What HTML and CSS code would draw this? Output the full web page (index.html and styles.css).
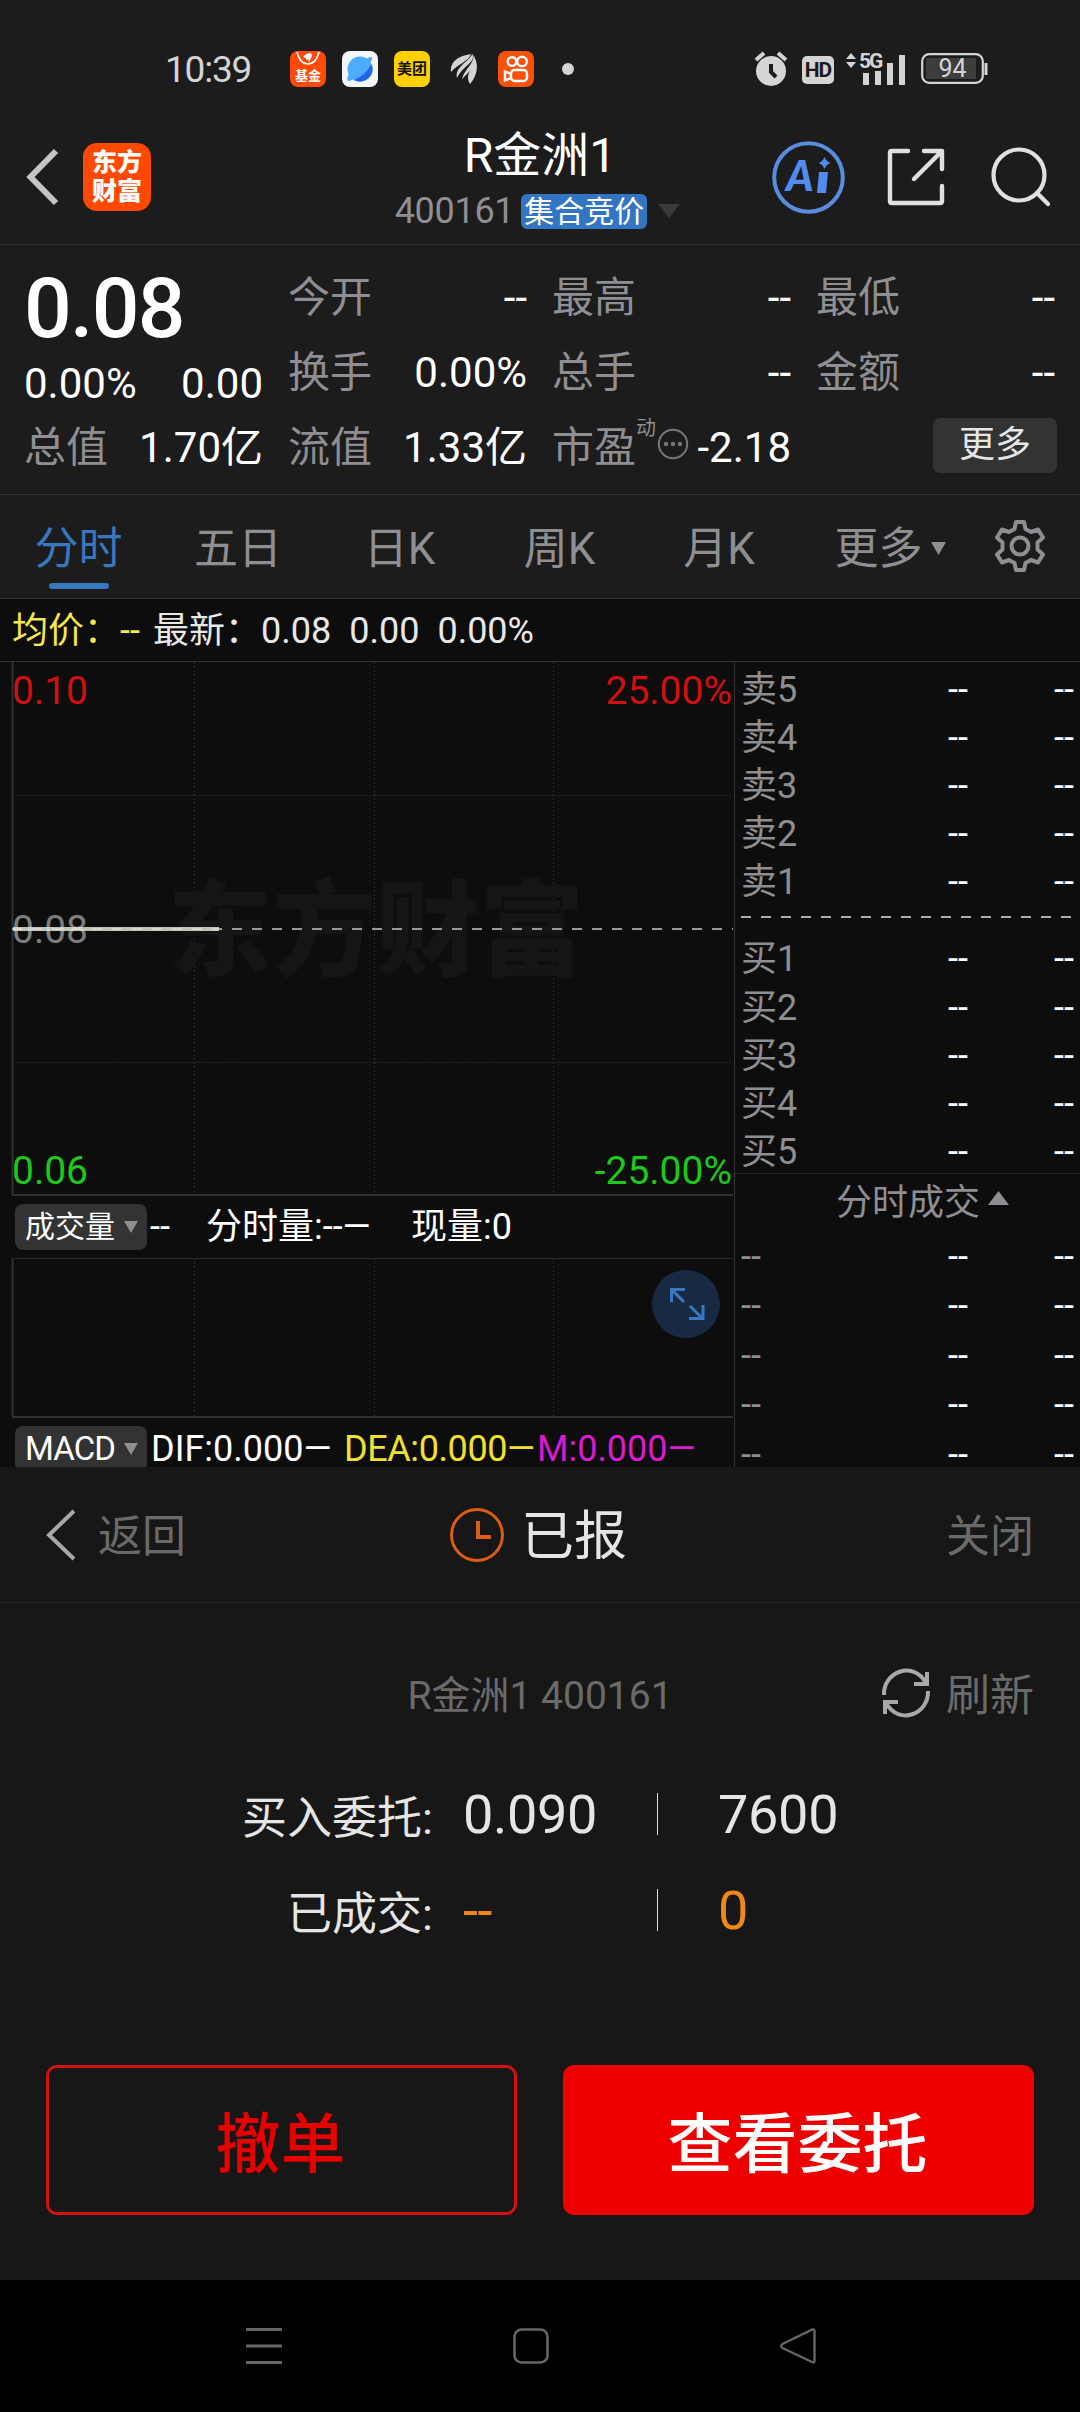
FILE: index.html
```html
<!DOCTYPE html>
<html lang="zh-CN">
<head>
<meta charset="utf-8">
<title>R金洲1 400161</title>
<link rel="stylesheet" href="styles.css">
</head>
<body>
<div class="screen">
  <div class="status">
    <span class="clock">10:39</span>
    <div class="apps">
      <div class="app app-fund"><svg width="36" height="17" viewBox="0 0 36 17"><path d="M7 1c2 8 6 12 11 12s9-4 11-12" fill="none" stroke="#fff" stroke-width="1.6"/><path d="M13 6q3-4 8-4l1 3-3 6-1-3-2 1v-2z" fill="#fff"/></svg><b>基金</b></div>
      <svg class="app" viewBox="0 0 36 36"><rect width="36" height="36" rx="8" fill="#f2f5f9"/><circle cx="18" cy="18" r="12.5" fill="#4badfc"/><path d="M29.5 13A12.5 12.5 0 0 1 12 29Q24 24 29.500 13z" fill="#1f63e8"/><path d="M24 8q7-4 6 0-3 8-12 16-8 6-12 6-2-2 1-7" fill="#4badfc"/></svg>
      <div class="app app-meituan"><b>美团</b></div>
      <svg class="app" viewBox="0 0 36 36" fill="#d4d4d4"><path d="M5 21C4 10 13 5 25 3 22 11 13 12 5 21z"/><path d="M11 27C9 16 20 13 26.500 3c3 9-9 11-15.500 24z"/><path d="M16 28C18 19 28 13 27.500 4c5 8-4 17-11.500 24z"/><path d="M24 33c-6-11 4-14 4.500-27 4.500 9 2.500 19-4.500 27z"/></svg>
      <svg class="app" viewBox="0 0 36 36"><rect width="36" height="36" rx="8" fill="#f8510b"/><g fill="none" stroke="#fff" stroke-width="2.400"><circle cx="14" cy="10.500" r="4.300"/><circle cx="24" cy="10.500" r="4.800"/><rect x="13" y="19" width="16" height="11" rx="3.500"/><path d="M13 23l-6-2.500v9l6-2.500"/></g></svg>
      <i class="dot"></i>
    </div>
    <div class="sys">
      <svg width="34" height="36" viewBox="0 0 34 36"><circle cx="17" cy="20" r="15" fill="#d4d4d4"/><path d="M2 9l8-7M32 9l-8-7" stroke="#d4d4d4" stroke-width="4"/><path d="M17 13v8l5 5" stroke="#1c1c1c" stroke-width="4" fill="none"/></svg>
      <span class="hd">HD</span>
      <svg class="signal" width="62" height="36" viewBox="0 0 62 36" fill="#d4d4d4"><path d="M1 8l5-6 5 6zM1 11h10l-5 6z"/><text x="14" y="17" class="g5">5G</text><path d="M18 22h6v12h-6zM30 20h6v14h-6zM42 12h6v22h-6zM54 4h6v30h-6z"/></svg>
      <svg width="68" height="34" viewBox="0 0 68 34"><rect x="1.200" y="2.200" width="60.600" height="28.600" rx="7" fill="none" stroke="#d4d4d4" stroke-width="2.200"/><rect x="5" y="6" width="50" height="21" fill="#3d3d3d"/><path d="M65 11v12" stroke="#d4d4d4" stroke-width="3"/><text x="31.500" y="25" text-anchor="middle" class="bat">94</text></svg>
    </div>
  </div>

  <header class="top">
    <svg class="back" width="34" height="56" viewBox="0 0 34 56"><path d="M31 2L5.500 28l25.500 26" fill="none" stroke="#c4c4c4" stroke-width="6"/></svg>
    <div class="brand">东方<br>财富</div>
    <div class="title">
      <h1>R金洲1</h1>
      <div class="sub"><span>400161</span><span class="tag">集合竞价</span><svg width="22" height="14"><path d="M0 0h22L11 14z" fill="#3a3a3a"/></svg></div>
    </div>
    <div class="tools">
      <svg width="73" height="73" viewBox="0 0 73 73"><circle cx="36.500" cy="36.500" r="34.300" fill="none" stroke="#5a8cdd" stroke-width="4"/><text x="14" y="50" class="ai">A</text><path d="M47 31h9l-2 21h-9z" fill="#528cf0"/><path d="M52.500 16q1.500 4.500 6 6-4.500 1.500-6 6-1.500-4.500-6-6 4.500-1.500 6-6z" fill="#528cf0"/></svg>
      <svg class="share" width="58" height="58" viewBox="0 0 58 58" fill="none" stroke="#e0e0e0" stroke-width="4.400" stroke-linecap="round" stroke-linejoin="round"><path d="M21 3H5Q3 3 3 5v48q0 2 2 2h48q2 0 2-2V38M37 3h18v18M54 4L27 31"/></svg>
      <svg width="60" height="60" viewBox="0 0 60 60" fill="none" stroke="#e0e0e0" stroke-width="4.200" stroke-linecap="round"><circle cx="28" cy="28" r="25.500"/><path d="M46 46l11 11"/></svg>
    </div>
  </header>

  <section class="quote">
    <div class="col first">
      <div class="price">0.08</div>
      <div class="row chg"><span>0.00%</span><span>0.00</span></div>
      <div class="row"><label>总值</label><span>1.70亿</span></div>
    </div>
    <div class="col">
      <div class="row"><label>今开</label><span>--</span></div>
      <div class="row"><label>换手</label><span>0.00%</span></div>
      <div class="row"><label>流值</label><span>1.33亿</span></div>
    </div>
    <div class="col">
      <div class="row"><label>最高</label><span>--</span></div>
      <div class="row"><label>总手</label><span>--</span></div>
      <div class="row pe"><label>市盈</label><sup>动</sup><svg width="32" height="32" viewBox="0 0 32 32"><circle cx="16" cy="16" r="14.200" fill="none" stroke="#77777a" stroke-width="2"/><g fill="#77777a"><circle cx="9" cy="16" r="2.200"/><circle cx="16" cy="16" r="2.200"/><circle cx="23" cy="16" r="2.200"/></g></svg><span>-2.18</span></div>
    </div>
    <div class="col">
      <div class="row"><label>最低</label><span>--</span></div>
      <div class="row"><label>金额</label><span>--</span></div>
      <div class="row end"><button class="more">更多</button></div>
    </div>
  </section>

  <nav class="tabs">
    <a class="on">分时</a><a>五日</a><a>日K</a><a>周K</a><a>月K</a>
    <a>更多<svg width="15" height="13"><path d="M0 0h15L7.500 13z" fill="#8e8e93"/></svg></a>
    <a><svg class="gear" width="54" height="54" viewBox="0 0 54 54" fill="none" stroke="#8e8e93" stroke-width="4" stroke-linejoin="round"><path d="M23 3h8l1.500 7 5.500 3 7-2.500 5 8-5.500 5v7l5.500 5-5 8-7-2.500-5.500 3L31 51h-8l-1.500-7-5.500-3-7 2.500-5-8 5.500-5v-7L4 18.500l5-8 7 2.500 5.500-3z"/><circle cx="27" cy="27" r="8.500"/></svg></a>
  </nav>

  <div class="info"><span class="avg">均价：--</span><span>最新：0.08</span><span>0.00</span><span>0.00%</span></div>

  <main class="market">
    <div class="charts">
      <div class="plot">
        <svg class="grid" width="734" height="535" viewBox="0 0 734 535">
          <path d="M12.500 0V534" stroke="#303030" stroke-width="2"/>
          <path d="M194.500 0V533M374.500 0V533M553.500 0V533" stroke="#2b2b2b" stroke-dasharray="2 2"/>
          <path d="M12 133.500H733M12 400.500H733" stroke="#232323" stroke-dasharray="2 1"/>
          <path d="M12 533H733" stroke="#303030" stroke-width="2"/>
        </svg>
        <div class="watermark">东方财富</div>
        <div class="lab up"><span>0.10</span><span>25.00%</span></div>
        <div class="lab"><span>0.08</span></div>
        <div class="lab down"><span>0.06</span><span>-25.00%</span></div>
        <svg class="grid" width="734" height="535" viewBox="0 0 734 535"><path d="M12 267H733" stroke="#9a9a9a" stroke-width="2" stroke-dasharray="10 10"/><path d="M13 267H219" stroke="#e2e2d6" stroke-width="4" opacity=".85"/></svg>
      </div>
      <div class="bar vol"><button class="pick">成交量<i></i></button><span>--</span><span class="v1">分时量:--—</span><span class="v2">现量:0</span></div>
      <div class="volume">
        <svg class="grid" width="734" height="160" viewBox="0 0 734 160">
          <path d="M12 .5H733" stroke="#2a2a2a"/>
          <path d="M12.500 0V159" stroke="#303030" stroke-width="2"/>
          <path d="M194.500 0V158M374.500 0V158M553.500 0V158" stroke="#2b2b2b" stroke-dasharray="2 2"/>
          <path d="M12 159H733" stroke="#303030" stroke-width="2"/>
        </svg>
        <svg class="expand" width="68" height="68" viewBox="0 0 68 68"><circle cx="34" cy="34" r="34" fill="#172a42"/><path d="M19.500 32V19.500H33M20 20l12 12M51 35v13.500H37M50 48L38 36" fill="none" stroke="#3878c0" stroke-width="3"/></svg>
      </div>
      <div class="bar macd"><button class="pick">MACD<i></i></button><span class="dif">DIF:0.000—</span><span class="dea">DEA:0.000—</span><span class="m">M:0.000—</span></div>
    </div>

    <aside class="book">
      <div class="level"><label>卖5</label><span>--</span><span>--</span></div>
      <div class="level"><label>卖4</label><span>--</span><span>--</span></div>
      <div class="level"><label>卖3</label><span>--</span><span>--</span></div>
      <div class="level"><label>卖2</label><span>--</span><span>--</span></div>
      <div class="level"><label>卖1</label><span>--</span><span>--</span></div>
      <svg class="split" width="334" height="29"><path d="M0 12H334" stroke="#aaa" stroke-width="2" stroke-dasharray="10 10"/></svg>
      <div class="level"><label>买1</label><span>--</span><span>--</span></div>
      <div class="level"><label>买2</label><span>--</span><span>--</span></div>
      <div class="level"><label>买3</label><span>--</span><span>--</span></div>
      <div class="level"><label>买4</label><span>--</span><span>--</span></div>
      <div class="level"><label>买5</label><span>--</span><span>--</span></div>
      <div class="deals-title">分时成交<svg width="21" height="14"><path d="M0 14h21L10.500 0z" fill="#8e8e93"/></svg></div>
      <div class="level deal"><label>--</label><span>--</span><span>--</span></div>
      <div class="level deal"><label>--</label><span>--</span><span>--</span></div>
      <div class="level deal"><label>--</label><span>--</span><span>--</span></div>
      <div class="level deal"><label>--</label><span>--</span><span>--</span></div>
      <div class="level deal last"><label>--</label><span>--</span><span>--</span></div>
    </aside>
  </main>

  <section class="sheet">
    <div class="sheet-head">
      <a class="ret"><svg width="30" height="52" viewBox="0 0 30 52"><path d="M28 2L3 26l25 24" fill="none" stroke="#a8a8a8" stroke-width="4"/></svg><span>返回</span></a>
      <div class="state"><svg width="54" height="56" viewBox="0 0 54 56" fill="none" stroke="#dd5d14"><circle cx="27" cy="28" r="25.500" stroke-width="3"/><path d="M28 14v16h13" stroke-width="4"/></svg><span>已报</span></div>
      <a class="close"><span>关闭</span></a>
    </div>
    <div class="stock">
      <span>R金洲1 400161</span>
      <a class="refresh"><svg width="48" height="50" viewBox="0 0 48 50" fill="none" stroke="#a8a8a8" stroke-width="4"><path d="M2 27C1 4 31-8 44 15M46 23C47 46 17 58 4 35"/><path d="M45 4v12H32M3 46V34H16"/></svg>刷新</a>
    </div>
    <div class="order">
      <label>买入委托:</label><b>0.090</b><i></i><b>7600</b>
      <label>已成交:</label><b class="o">--</b><i></i><b class="o">0</b>
    </div>
    <div class="actions"><button class="cancel">撤单</button><button class="view">查看委托</button></div>
  </section>

  <div class="sysnav">
    <svg width="36" height="38" viewBox="0 0 36 38"><path d="M0 2.500h36M0 19h36M0 35.500h36" stroke="#666" stroke-width="3"/></svg>
    <svg width="36" height="36" viewBox="0 0 36 36"><rect x="1.500" y="1.500" width="33" height="33" rx="7" fill="none" stroke="#666" stroke-width="2.600"/></svg>
    <svg width="36" height="36" viewBox="0 0 36 36"><path d="M32.500 1.500Q34.500 1 34.500 3.500v29q0 2.500-2.500 1.500L2.500 20q-2.500-2 0-4z" fill="none" stroke="#666" stroke-width="2.400"/></svg>
  </div>
</div>
</body>
</html>
```
FILE: styles.css
```css
* { box-sizing: border-box; }
body { margin: 0; background: #000; }
svg { display: block; flex: none; overflow: visible; }
h1, i, b { font-weight: 400; font-style: normal; margin: 0; }
button { font: inherit; border: 0; padding: 0; margin: 0; color: inherit; }

.screen {
  width: 1080px; height: 2412px; overflow: hidden;
  display: flex; flex-direction: column;
  background: #1c1c1c; color: #fff;
  font-family: Roboto, "Noto Sans CJK SC", sans-serif;
  white-space: nowrap;
}

/* status bar */
.status { height: 110px; padding: 28px 91px 0 165px; display: flex; align-items: center; color: #d4d4d4; }
.clock { font-size: 37px; line-height: 46px; letter-spacing: -1.2px; width: 125px; padding-top: 2px; }
.apps { display: flex; gap: 16px; align-items: center; }
.app { width: 36px; height: 36px; border-radius: 8px; color: #fff; text-align: center; }
.app b { display: block; font-weight: 700; }
.app-fund { background: #ff4a0a; }
.app-fund b { font-size: 13px; line-height: 19px; margin-top: -2px; }
.app-meituan { background: #ffd000; color: #111; }
.app-meituan b { font-size: 15px; line-height: 36px; }
.dot { width: 12px; height: 12px; border-radius: 50%; background: #d4d4d4; margin-left: 12px; }
.sys { display: flex; align-items: center; margin-left: auto; }
.hd { width: 32px; height: 28px; margin: 2px 11px 0 14px; border-radius: 5px; background: #d4d4d4; color: #1c1c1c; font: 700 21px/28px Roboto, sans-serif; text-align: center; letter-spacing: -1px; }
.signal { margin-right: 14px; }
.g5 { font: 700 21px Roboto, sans-serif; letter-spacing: -2px; }
.bat { font: 400 25px Roboto, sans-serif; fill: #d4d4d4; }

/* title bar */
.top { height: 135px; border-bottom: 1px solid #333; display: flex; align-items: center; position: relative; padding: 0 29px 0 25px; }
.brand { width: 68px; height: 68px; margin-left: 24px; border-radius: 14px; background: #ff4800; font-size: 25px; font-weight: 900; line-height: 29px; padding-top: 5px; text-align: center; }
.title { position: absolute; left: 0; right: 0; top: 18px; display: flex; flex-direction: column; align-items: center; }
.title h1 { font-size: 48px; line-height: 55px; }
.sub { display: flex; align-items: center; font-size: 36px; line-height: 38px; color: #8e8e93; padding: 9px 5px 0 0; letter-spacing: -.3px; }
.tag { margin: 0 11px 0 7px; width: 126px; height: 35px; border-radius: 6px; background: #3275c2; color: #fff; font-size: 30px; line-height: 35px; text-align: center; letter-spacing: 0; }
.tools { margin-left: auto; display: flex; align-items: center; }
.share { margin: 0 46px 0 42px; }
.ai { font: italic 900 42px Lato, sans-serif; fill: #528cf0; }

/* quote summary */
.quote { height: 250px; border-bottom: 1px solid #333; padding: 15px 24px 0; display: grid; grid-template-columns: repeat(4, 239px); column-gap: 25px; font-size: 42px; }
.row { height: 75px; line-height: 75px; display: flex; justify-content: space-between; }
.quote label { color: #8e8e93; }
.price { font-size: 84px; font-weight: 500; height: 98px; line-height: 98px; letter-spacing: -1.700px; }
.chg { height: 52px; line-height: 52px; }
.row.pe { align-items: center; justify-content: flex-start; }
.pe sup { font-size: 20px; line-height: 24px; color: #8e8e93; align-self: flex-start; margin: 6px 0 0; }
.pe svg { margin: -8px 0 0 1px; }
.pe span { margin-left: auto; }
.end { justify-content: flex-end; align-items: center; }
.more { width: 124px; height: 55px; margin: -4px -2px 0 0; border-radius: 7px; background: #333; color: #e6e6e6; font-size: 36px; line-height: 55px; }

/* period tabs */
.tabs { height: 104px; border-bottom: 1px solid #333; display: grid; grid-template-columns: 157px 162px 161px 159px 160px 182px 77px; color: #8e8e93; font-size: 44px; line-height: 104px; padding-top: 3px; }
.tabs a { height: 101px; display: flex; justify-content: center; align-items: center; gap: 8px; position: relative; }
.tabs .gear { margin-top: -6px; }
.tabs .on { color: #3878c0; }
.tabs .on::after { content: ""; position: absolute; left: 49px; bottom: 10px; width: 60px; height: 6px; border-radius: 3px; background: #3878c0; }

.info { height: 63px; background: #0d0d0d; border-bottom: 1px solid #333; padding-left: 12px; display: flex; gap: 18px; font-size: 36px; line-height: 65px; color: #e8e8e8; }
.avg { color: #f8e74c; width: 141px; margin-right: -18px; }

/* charts and order book */
.market { height: 805px; flex: none; background: #0d0d0d; display: flex; overflow: hidden; }
.charts { width: 734px; flex: none; }
.grid { position: absolute; left: 0; top: 0; }
.plot { height: 534px; position: relative; padding: 2px 2px 0 12px; display: flex; flex-direction: column; justify-content: space-between; font-size: 39px; line-height: 54px; color: #7d7d7d; }
.lab { display: flex; justify-content: space-between; position: relative; }
.up { color: #d01010; }
.down { color: #1dc81d; top: 2px; }
.watermark { position: absolute; left: 168px; top: 196px; font-size: 104px; line-height: 150px; font-weight: 900; color: #151515; }
.bar { display: flex; align-items: center; padding-left: 15px; font-size: 36px; line-height: 50px; }
.vol { height: 62px; }
.vol span:nth-child(2) { width: 59px; padding-left: 3px; }
.v1 { width: 205px; }
.pick { width: 132px; height: 46px; border-radius: 8px; background: #333; font-size: 30px; line-height: 46px; display: flex; align-items: center; justify-content: space-between; padding: 0 9px 0 10px; }
.pick i { border: solid transparent; border-width: 12px 7.500px 0; border-top-color: #8e8e93; }
.macd .pick { font-size: 33px; letter-spacing: -.9px; }
.volume { height: 160px; position: relative; }
.expand { position: absolute; left: 652px; top: 12px; }
.macd { height: 49px; margin-top: 6px; }
.dif { width: 193px; padding-left: 4px; }
.dea { width: 197px; color: #f0e130; padding-left: 4px; letter-spacing: -.4px; }
.m { color: #d81ad0; }
.book { flex: 1; border-left: 1px solid #333; padding: 3px 5px 0 6px; font-size: 36px; }
.level { height: 48.100px; line-height: 50px; display: grid; grid-template-columns: 121px 106px 106px; }
.level label { color: #8e8e93; }
.level span { text-align: right; }
.split { height: 29px; }
.deals-title { margin: -2px -5px 0 -6px; border-top: 1px solid #222; height: 60px; line-height: 60px; padding-left: 101px; display: flex; align-items: center; gap: 8px; color: #8e8e93; }
.deals-title svg { margin-top: -10px; }
.deal { height: 49.500px; line-height: 49px; }
.last { height: 45px; line-height: 48px; }

/* order status sheet */
.sheet { height: 813px; flex: none; background: #171717; color: #e5e5e5; padding: 0 46px; }
.sheet-head { height: 136px; margin: 0 -46px; padding: 0 46px; border-bottom: 1px solid #262626; display: grid; grid-template-columns: 1fr auto 1fr; align-items: center; font-size: 44px; color: #6a6a6a; line-height: 60px; }
.sheet-head span { padding-top: 4px; display: block; }
.ret { display: flex; align-items: center; gap: 22px; }
.state { display: flex; align-items: center; gap: 17px; font-size: 53px; color: #e5e5e5; padding-right: 3px; }
.close { text-align: right; }
.stock { height: 182px; display: flex; align-items: center; justify-content: center; position: relative; font-size: 39px; color: #6a6a6a; padding-bottom: 5px; }
.refresh { position: absolute; right: 0; top: 60px; line-height: 66px; font-size: 44px; display: flex; align-items: center; gap: 16px; }
.refresh svg { margin-top: -6px; }
.order { display: grid; grid-template-columns: 387px 224px 61px auto; grid-auto-rows: 96px; align-items: center; font-size: 45px; margin-top: -19px; }
.order label { text-align: right; }
.order b { font-size: 54px; padding-left: 30px; letter-spacing: -.3px; }
.order b:nth-child(4n) { padding-left: 0; }
.order i { width: 1px; height: 42px; background: #ddd; }
.order .o { color: #f08818; }
.actions { display: grid; grid-template-columns: 471px 471px; column-gap: 46px; margin-top: 107px; }
.actions button { height: 150px; border-radius: 11px; font-size: 65px; font-weight: 500; line-height: 150px; padding: 5px 2px 0 0; }
.actions .cancel { line-height: 144px; background: none; border: 3px solid #d01212; color: #e60000; }
.view { background: #ee0000; color: #fff; }

.sysnav { height: 132px; flex: none; background: #000; display: flex; align-items: center; padding: 0 264px 0 246px; justify-content: space-between; }
```
